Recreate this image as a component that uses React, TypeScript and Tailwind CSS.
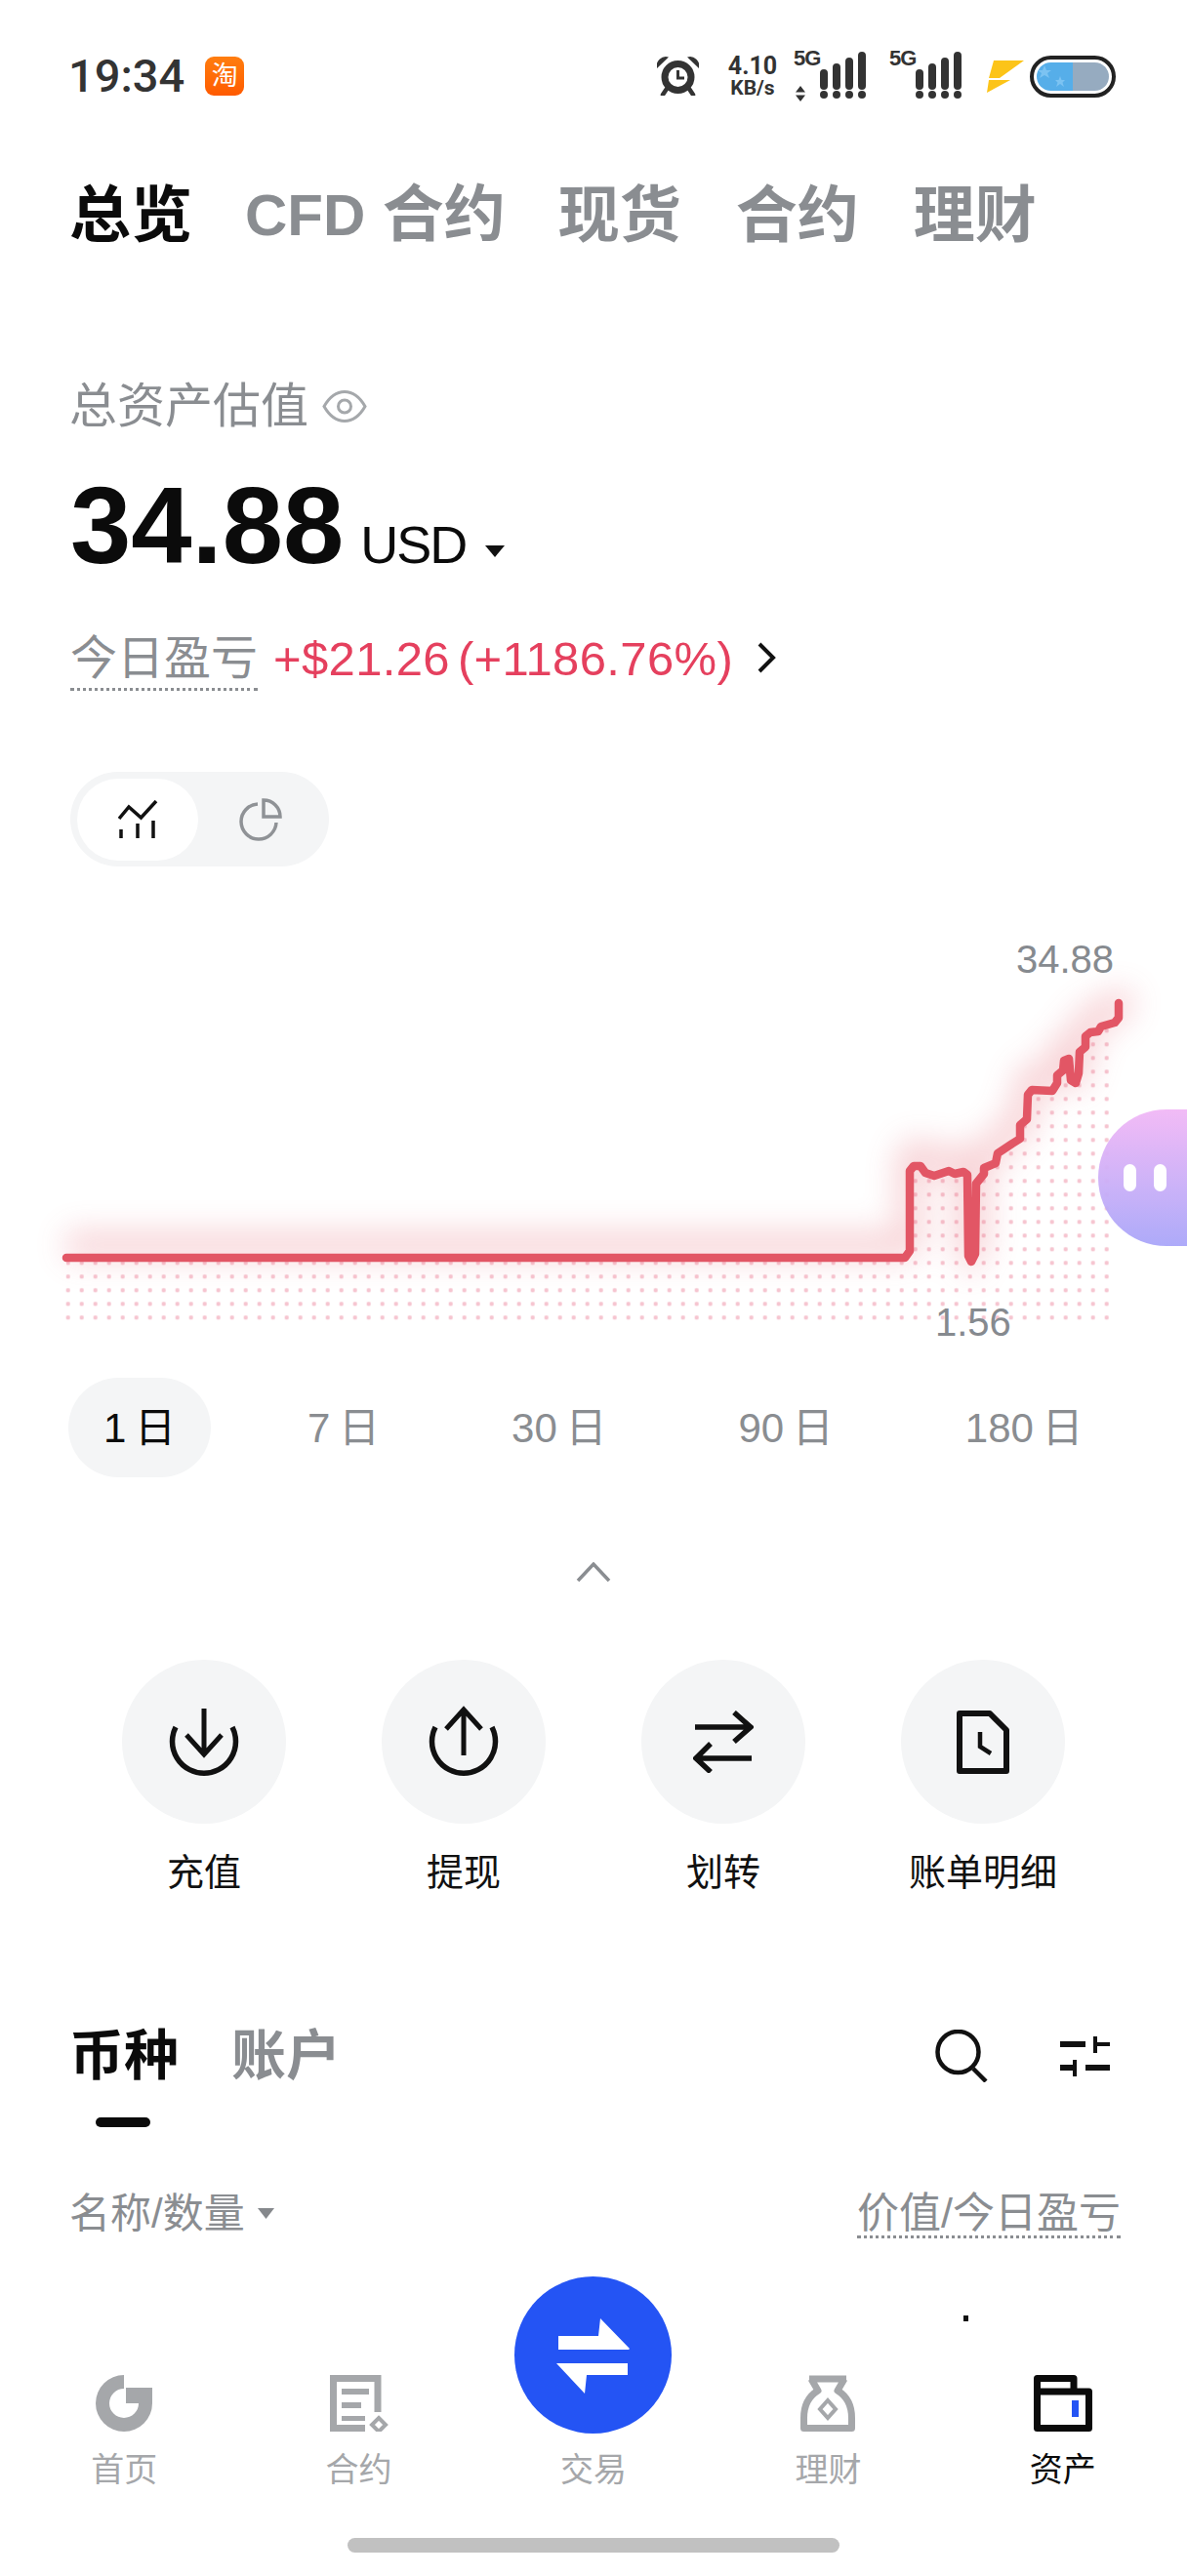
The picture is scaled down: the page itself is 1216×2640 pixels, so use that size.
const linePoints = [
  [68, 1289], [927, 1289], [932, 1282], [932, 1200], [936, 1195], [943, 1195], [948, 1202], [957, 1205],
  [972, 1200], [978, 1203], [987, 1201], [991, 1204], [992, 1287], [995, 1293], [999, 1285], [1000, 1213],
  [1008, 1203], [1008, 1197], [1020, 1192], [1022, 1182], [1037, 1172], [1045, 1167], [1045, 1153],
  [1052, 1147], [1053, 1122], [1057, 1117], [1078, 1118], [1083, 1110], [1083, 1102], [1089, 1097],
  [1090, 1087], [1095, 1085], [1097, 1107], [1102, 1110], [1105, 1100], [1106, 1078], [1112, 1073],
  [1112, 1062], [1117, 1058], [1125, 1057], [1128, 1052], [1142, 1048], [1146, 1043], [1146, 1028],
];
const linePath = linePoints.map(([x, y]) => `${x},${y}`).join(' ');
const areaPath = `${linePath} 1137,1028 1137,1354 66,1354`;

const ranges = ['1 日', '7 日', '30 日', '90 日', '180 日'];

function SignalBars({ arrows }: { arrows?: boolean }) {
  return (
    <div className="flex h-[56px] items-start">
      <div className="flex h-full w-[26px] flex-col justify-between">
        <span className="text-[22px] leading-[20px] font-bold tracking-[-1px] text-[#333]">5G</span>
        {arrows ? (
          <svg width="12" height="16" viewBox="0 0 12 16" className="mb-[2px] ml-[1px]">
            <path d="M6 0 11 6.500H1ZM6 16 1 9.500H11Z" fill="#333" />
          </svg>
        ) : (
          <span />
        )}
      </div>
      <svg width="48" height="52" viewBox="0 0 48 52" fill="none" className="mt-[3px]">
        <g stroke="#333" strokeWidth="8" strokeLinecap="round">
          <path d="M5 22V35M18 16V35M31 10V35M44 4V35" />
        </g>
        <g fill="#333">
          <circle cx="5" cy="44" r="4" />
          <circle cx="18" cy="44" r="4" />
          <circle cx="31" cy="44" r="4" />
          <circle cx="44" cy="44" r="4" />
        </g>
      </svg>
    </div>
  );
}

function StatusBar() {
  return (
    <div className="flex h-[156px] items-center justify-between pr-[73px] pl-[70px]">
      <div className="flex items-center">
        <span className="text-[47px] leading-[56px] font-medium text-[#333] [font-family:Roboto,sans-serif]">19:34</span>
        <span className="ml-[21px] flex h-[40px] w-[40px] items-center justify-center rounded-[9px] bg-gradient-to-b from-[#ff7d0f] to-[#ff5a00] text-[27px] leading-none text-white">
          淘
        </span>
      </div>
      <div className="flex items-center">
        <svg width="43" height="40" viewBox="0 0 43 40" fill="none">
          <circle cx="21.500" cy="21" r="13.500" stroke="#333" strokeWidth="7" />
          <path d="M21.500 14V22H28" stroke="#333" strokeWidth="3" />
          <path d="M0 12A9.500 9.500 0 0 1 12 0.500ZM43 12A9.500 9.500 0 0 0 31 0.500Z" fill="#333" />
          <path d="M10 33 6 39M33 33 37 39" stroke="#333" strokeWidth="4.500" strokeLinecap="round" />
        </svg>
        <div className="ml-[29px] flex w-[52px] flex-col items-center text-[#333] [font-family:Roboto,sans-serif]">
          <span className="text-[25px] leading-[24px] font-bold">4.10</span>
          <span className="text-[21px] leading-[20px] font-bold">KB/s</span>
        </div>
        <div className="ml-[16px]">
          <SignalBars arrows />
        </div>
        <div className="ml-[24px]">
          <SignalBars />
        </div>
        <svg width="38" height="33" viewBox="0 0 38 33" className="ml-[26px]">
          <path d="M7 0H38L13 18H2ZM2 20H24L0 33Z" fill="#fcc419" />
        </svg>
        <div className="ml-[6px] h-[43px] w-[88px] rounded-full border-[4px] border-[#222] p-[3px]">
          <div className="flex h-full overflow-hidden rounded-full">
            <div className="h-full w-[37px] bg-[#56aee9]">
              <svg width="37" height="29" viewBox="0 0 37 29">
                <path d="M8 3 10 8 15 8 11 11 13 16 8 13 3 16 5 11 1 8 6 8ZM24 14 25.500 18 29 18 26.500 20.500 28 25 24 22 20 25 21.500 20.500 19 18 22.500 18Z" fill="#7cc3f2" />
              </svg>
            </div>
            <div className="h-full flex-1 bg-[#96abc0]" />
          </div>
        </div>
      </div>
    </div>
  );
}

function TitleTabs() {
  return (
    <div className="mt-[23px] flex h-[82px] items-center pl-[71px] text-[63px] leading-[82px] font-bold text-[#8a8d91]">
      <span className="mr-[54px] text-[#0b0b0b]">总览</span>
      <span className="mr-[54px]">
        <span className="text-[60px]">CFD</span> 合约
      </span>
      <span className="mr-[56px]">现货</span>
      <span className="mr-[56px]">合约</span>
      <span>理财</span>
    </div>
  );
}

function Summary() {
  return (
    <div className="pl-[72px]">
      <div className="mt-[125px] -ml-[1px] flex h-[60px] items-center text-[49px] leading-[60px] text-[#8a8d91]">
        总资产估值
        <svg width="46" height="33" viewBox="0 0 46 33" fill="none" className="ml-[14px]">
          <path d="M2 16.500C8 6 15 1.500 23 1.500S38 6 44 16.500C38 27 31 31.500 23 31.500S8 27 2 16.500Z" stroke="#a5a8ab" strokeWidth="3" />
          <circle cx="23" cy="16.500" r="6.500" stroke="#a5a8ab" strokeWidth="3" />
        </svg>
      </div>
      <div className="mt-[38px] flex h-[110px] items-baseline text-[#0b0b0b]">
        <span className="text-[112px] leading-[110px] font-bold">34.88</span>
        <span className="ml-[17px] text-[54px] leading-[110px] tracking-[-2px]">USD</span>
        <svg width="20" height="12" viewBox="0 0 20 12" className="mt-[75px] ml-[20px] self-start">
          <path d="M0 0H20L10 12Z" fill="#111" />
        </svg>
      </div>
      <div className="mt-[51px] flex items-start">
        <span className="border-b-[3px] border-dotted border-[#8a8d91] text-[48px] leading-[60px] text-[#8a8d91]">今日盈亏</span>
        <span className="ml-[16px] text-[49px] leading-[60px] tracking-[0.35px] text-[#e5405e] [word-spacing:-6px]">+$21.26 (+1186.76%)</span>
        <svg width="20" height="32" viewBox="0 0 20 32" fill="none" className="mt-[13px] ml-[24px]">
          <path d="M3 2 17 16 3 30" stroke="#111" strokeWidth="4" />
        </svg>
      </div>
      <div className="mt-[83px] flex h-[97px] w-[265px] items-center rounded-full bg-[#f4f5f6] px-[7px]">
        <div className="flex h-[84px] w-[124px] items-center justify-center rounded-full bg-white">
          <svg width="41" height="39" viewBox="0 0 41 39" fill="none" stroke="#111" strokeWidth="3.500">
            <path d="M1 19 11 7 23.500 18 39 1" />
            <path d="M3 30V39M20 24V39M36 21V39" />
          </svg>
        </div>
        <div className="flex flex-1 justify-center">
          <svg width="44" height="44" viewBox="0 0 44 44" fill="none" stroke="#8f9296" strokeWidth="3.500">
            <path d="M19 6A18 18 0 1 0 38 25" />
            <path d="M25 2A17 17 0 0 1 42 19H25Z" />
          </svg>
        </div>
      </div>
    </div>
  );
}

function Chart() {
  return (
    <div className="relative mt-[52px] h-[450px]">
      <svg width="1216" height="450" viewBox="0 940 1216 450" fill="none" className="block">
        <defs>
          <pattern id="dots" x="6.700" y="-0.700" width="14" height="14" patternUnits="userSpaceOnUse">
            <circle cx="7" cy="7" r="2.200" fill="#f6c5d0" />
          </pattern>
          <clipPath id="area">
            <polygon points={areaPath} />
          </clipPath>
          <filter id="glow" x="-10%" y="-30%" width="120%" height="160%">
            <feGaussianBlur stdDeviation="16" />
          </filter>
        </defs>
        <rect x="66" y="1028" width="1074" height="326" fill="url(#dots)" clipPath="url(#area)" />
        <polyline points={linePath} stroke="#e25665" strokeWidth="28" opacity="0.26" filter="url(#glow)" transform="translate(0 -13)" />
        <polyline points={linePath} stroke="#e25665" strokeWidth="8.500" strokeLinecap="round" strokeLinejoin="round" />
      </svg>
      <span className="absolute top-[18px] left-[1041px] text-[40px] leading-[50px] text-[#868a8f]">34.88</span>
      <span className="absolute top-[390px] left-[958px] text-[40px] leading-[50px] text-[#868a8f]">1.56</span>
      <div className="absolute top-[197px] right-0 flex h-[140px] w-[91px] items-center gap-[18px] rounded-l-[70px] bg-gradient-to-b from-[#f2b8f6] to-[#a9a6f9] pl-[26px] opacity-95">
        <div className="h-[28px] w-[13px] rounded-full bg-white" />
        <div className="h-[28px] w-[13px] rounded-full bg-white" />
      </div>
    </div>
  );
}

function RangeTabs() {
  return (
    <div className="mt-[22px] flex gap-[63px] pl-[70px] [word-spacing:-3px]">
      {ranges.map((range, i) => (
        <div
          key={range}
          className={
            i === 0
              ? 'flex h-[102px] items-center rounded-full bg-[#f4f5f6] px-[36px] text-[42px] text-[#0b0b0b]'
              : 'flex h-[102px] items-center px-[36px] text-[42px] text-[#8a8d91]'
          }
        >
          {range}
        </div>
      ))}
    </div>
  );
}

function ActionIcon({ name }: { name: string }) {
  if (name === 'deposit') {
    return (
      <svg width="76" height="76" viewBox="0 0 76 76" fill="none" stroke="#111" strokeWidth="5.500">
        <path d="M9 23A32.500 32.500 0 1 0 67 23" />
        <path d="M38 4V51M20 31 38 51 56 31" strokeWidth="5" />
      </svg>
    );
  }
  if (name === 'withdraw') {
    return (
      <svg width="76" height="76" viewBox="0 0 76 76" fill="none" stroke="#111" strokeWidth="5.500">
        <path d="M9 23A32.500 32.500 0 1 0 67 23" />
        <path d="M38 52V5M20 25 38 5 56 25" strokeWidth="5" />
      </svg>
    );
  }
  if (name === 'transfer') {
    return (
      <svg width="62" height="64" viewBox="0 0 62 64" fill="none" stroke="#111" strokeWidth="5.500">
        <path d="M2 17H58M42 2 59 17 42 32" />
        <path d="M60 49H4M18 34 3 49 18 63" />
      </svg>
    );
  }
  return (
    <svg width="54" height="65" viewBox="0 0 54 65" fill="none" stroke="#111" strokeWidth="6">
      <path d="M3 3H34L51 20V62H3Z" strokeLinejoin="round" />
      <path d="M24 22V37L35 44" strokeWidth="4.500" />
    </svg>
  );
}

function Actions() {
  const items = [
    { name: 'deposit', label: '充值' },
    { name: 'withdraw', label: '提现' },
    { name: 'transfer', label: '划转' },
    { name: 'bill', label: '账单明细' },
  ];
  return (
    <div className="mt-[80px] grid grid-cols-4 px-[76px]">
      {items.map((item) => (
        <div key={item.name} className="flex flex-col items-center">
          <div className="flex h-[168px] w-[168px] items-center justify-center rounded-full bg-[#f4f5f6]">
            <ActionIcon name={item.name} />
          </div>
          <span className="mt-[25px] text-[38px] leading-[50px] text-[#111]">{item.label}</span>
        </div>
      ))}
    </div>
  );
}

function AssetsHeader() {
  return (
    <div>
      <div className="mt-[131px] flex h-[64px] items-center justify-between pr-[79px] pl-[71px]">
        <div className="flex items-center gap-[54px] text-[56px] leading-[64px] font-bold">
          <span className="text-[#0b0b0b]">币种</span>
          <span className="text-[#8a8d91]">账户</span>
        </div>
        <div className="flex items-center gap-[74px]">
          <svg width="54" height="54" viewBox="0 0 54 54" fill="none" stroke="#111" strokeWidth="4.500">
            <circle cx="23.500" cy="23" r="21" />
            <path d="M39 40 52 53" />
          </svg>
          <svg width="51" height="41" viewBox="0 0 51 41" fill="none" stroke="#111">
            <path d="M0 8H26M0 32H15M26 32H51" strokeWidth="6" />
            <path d="M36 0V17M36 8H51M15 24V41" strokeWidth="4" />
          </svg>
        </div>
      </div>
      <div className="mt-[31px] ml-[98px] h-[10px] w-[56px] rounded-full bg-[#0b0b0b]" />
      <div className="mt-[60px] flex h-[56px] items-start justify-between pr-[68px] pl-[71px] text-[42px] text-[#8a8d91]">
        <div className="flex items-center pt-[2px] leading-[53px]">
          名称/数量
          <svg width="17" height="11" viewBox="0 0 17 11" className="ml-[13px]">
            <path d="M0 0H17L8.500 11Z" fill="#85888c" />
          </svg>
        </div>
        <span className="mt-[5px] border-b-[3px] border-dotted border-[#8a8d91] text-[43px] leading-[46px]">价值/今日盈亏</span>
      </div>
    </div>
  );
}

function NavIcon({ name }: { name: string }) {
  if (name === 'home') {
    return (
      <svg width="58" height="58" viewBox="0 0 58 58" fill="#a5a7aa">
        <path d="M29 0A29 29 0 1 0 58 29H44A15 15 0 1 1 29 14Z" />
        <rect x="31" y="13" width="27" height="16" />
      </svg>
    );
  }
  if (name === 'contract') {
    return (
      <svg width="60" height="58" viewBox="0 0 60 58" fill="none">
        <path d="M49 38V3.500H3.500V54.500H36" stroke="#a5a7aa" strokeWidth="7" />
        <path d="M12 14H40V20H12ZM12 28H32V34H12ZM12 42H36V47H12Z" fill="#a5a7aa" />
        <path d="M50 44 57 51 50 58 43 51Z" stroke="#a5a7aa" strokeWidth="4" />
      </svg>
    );
  }
  if (name === 'earn') {
    return (
      <svg width="56" height="58" viewBox="0 0 56 58" fill="none" stroke="#a5a7aa" strokeWidth="7">
        <path d="M9 4H47M11 4 18 16C8 22 3.500 32 3.500 44V54.500H52.500V44C52.500 32 48 22 38 16L45 4" strokeLinejoin="round" />
        <path d="M28 26 36 35 28 44 20 35Z" strokeWidth="4" />
      </svg>
    );
  }
  return (
    <svg width="60" height="58" viewBox="0 0 60 58" fill="none">
      <path d="M3.500 54.500V3.500H41V17H56.500V54.500ZM3.500 17H41" stroke="#0b0b0b" strokeWidth="7" strokeLinejoin="round" />
      <rect x="39" y="26" width="7" height="17" fill="#2454f4" />
    </svg>
  );
}

function BottomNav() {
  const items = [
    { name: 'home', label: '首页' },
    { name: 'contract', label: '合约' },
    { name: 'trade', label: '交易' },
    { name: 'earn', label: '理财' },
    { name: 'assets', label: '资产' },
  ];
  return (
    <div className="mt-[138px] grid grid-cols-5 px-[7px]">
      {items.map((item) => (
        <div key={item.name} className="relative flex flex-col items-center">
          <div className="h-[58px]">{item.name !== 'trade' && <NavIcon name={item.name} />}</div>
          {item.name === 'trade' && (
            <div className="absolute top-[-101px] left-[39px] h-[161px] w-[161px] rounded-full bg-[#2454f4]">
              <svg width="160" height="160" viewBox="0 0 160 160">
                <path d="M45 61H86L88 43 118 74 117 75H45ZM43 89H116V101H74L72 120Z" fill="#fff" />
              </svg>
            </div>
          )}
          <span className={`mt-[19px] text-[34px] leading-[40px] ${item.name === 'assets' ? 'text-[#0b0b0b]' : 'text-[#a5a7aa]'}`}>
            {item.label}
          </span>
        </div>
      ))}
    </div>
  );
}

export default function App() {
  return (
    <div className="relative h-[2640px] w-[1216px] overflow-hidden bg-white [font-family:'Liberation_Sans','Noto_Sans_CJK_SC',sans-serif]">
      <StatusBar />
      <TitleTabs />
      <Summary />
      <Chart />
      <RangeTabs />
      <svg width="36" height="20" viewBox="0 0 36 20" fill="none" className="mx-auto mt-[87px] block">
        <path d="M2 19 18 2 34 19" stroke="#8a8d91" strokeWidth="3.500" />
      </svg>
      <Actions />
      <AssetsHeader />
      <div className="absolute top-[2373px] left-[987px] h-[6px] w-[5px] bg-[#111]" />
      <BottomNav />
      <div className="mx-auto mt-[50px] h-[15px] w-[504px] rounded-full bg-[#c1c1c1]" />
    </div>
  );
}
